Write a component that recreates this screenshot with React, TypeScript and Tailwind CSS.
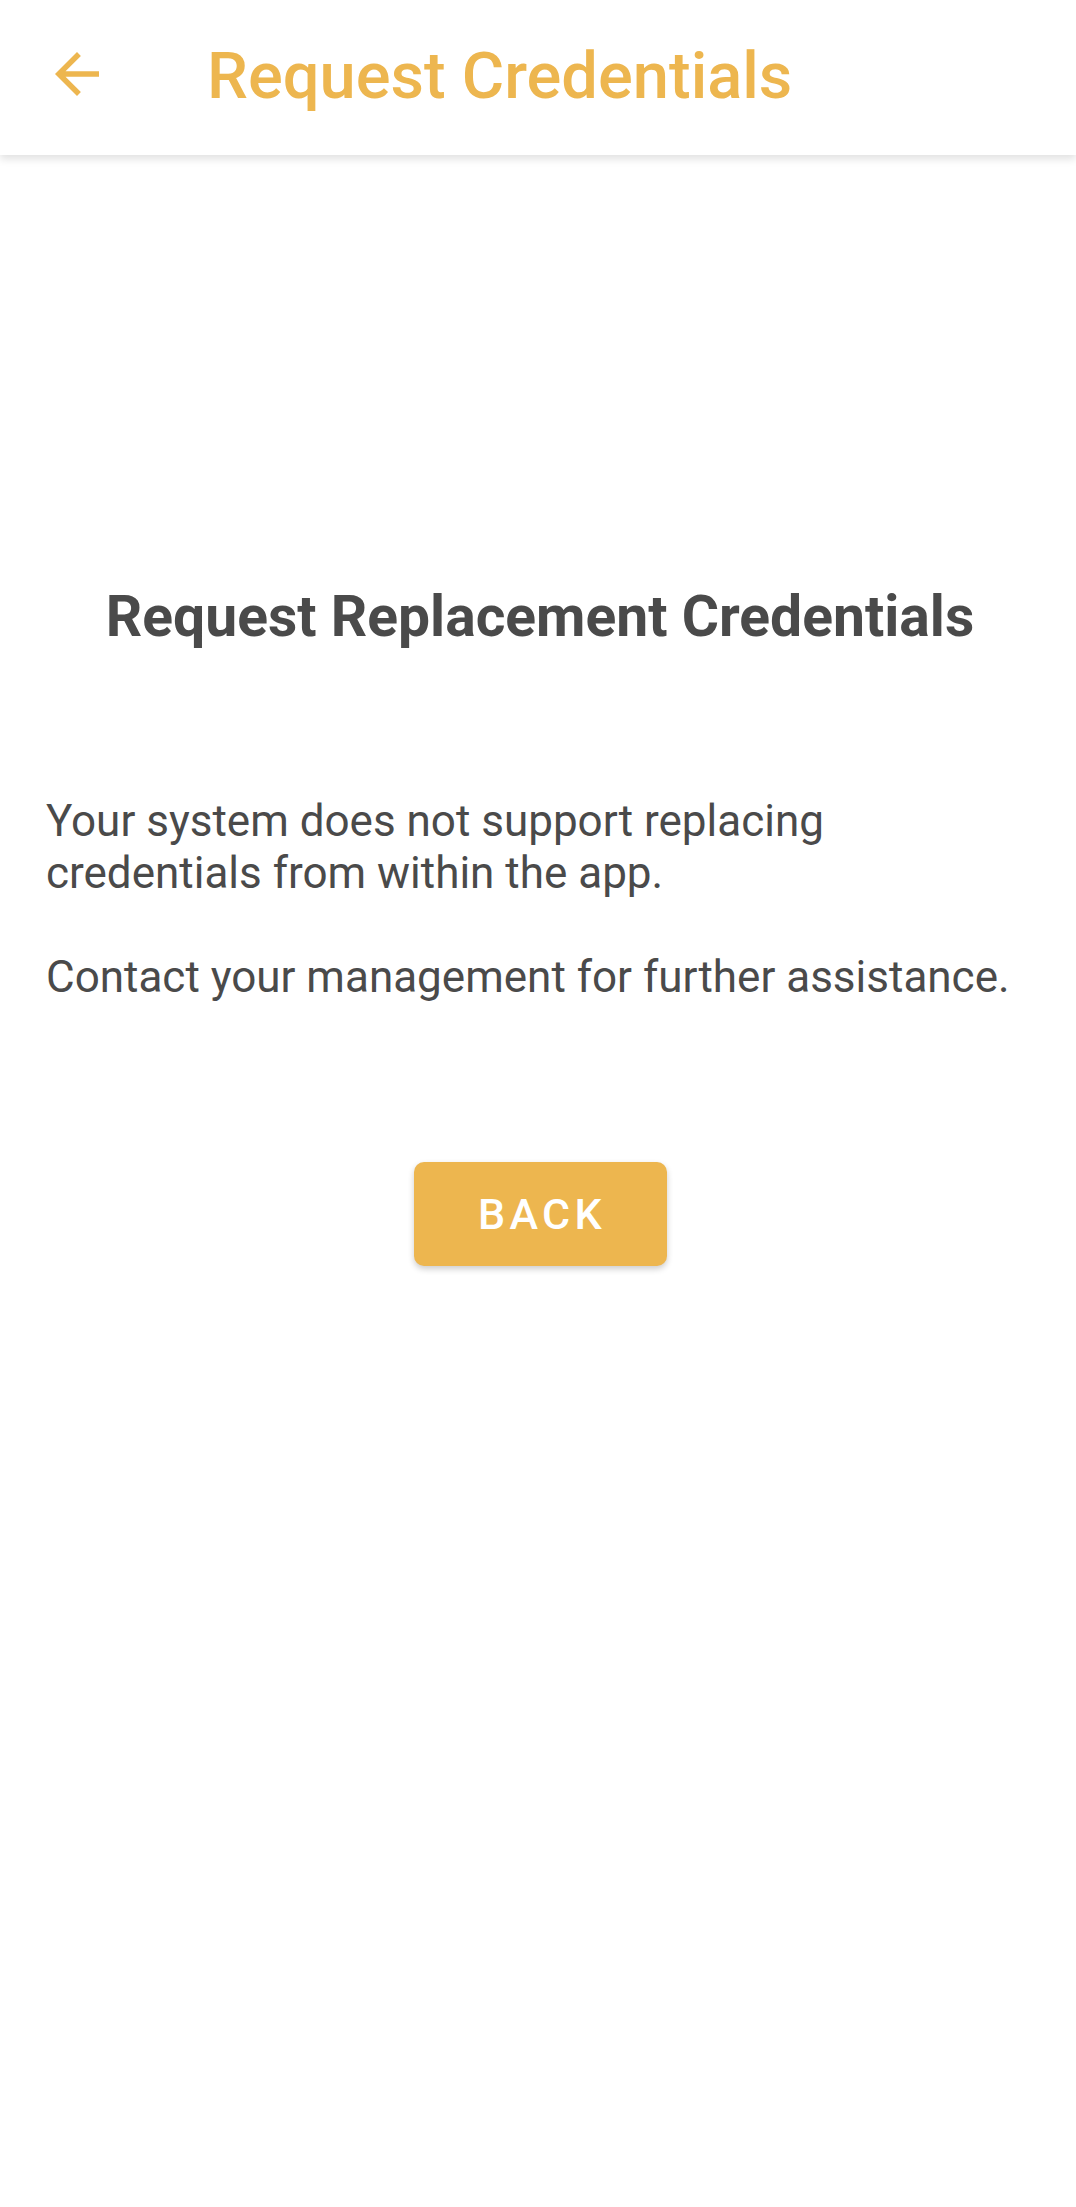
import React from "react";

export default function App() {
  return (
    <div className="w-[1076px] h-[2207px] bg-white flex flex-col" style={{ fontFamily: "Roboto, 'Noto Sans', sans-serif" }}>
      <header className="relative z-10 h-[155px] shrink-0 bg-white flex items-center shadow-[0_4px_8px_rgba(0,0,0,0.12)]">
        <div className="ml-[44px] w-[66px] h-[66px] -mt-[8px] flex items-center justify-center">
          <svg viewBox="0 0 24 24" width="66" height="66" fill="#EDB64F">
            <path d="M20 11H7.83l5.59-5.59L12 4l-8 8 8 8 1.41-1.41L7.83 13H20v-2z" />
          </svg>
        </div>
        <h1 className="ml-[97px] -mt-[2px] text-[65px] leading-none font-medium text-[#EDB64F]">Request Credentials</h1>
      </header>
      <main className="flex flex-col">
        <h2 className="mt-[427px] pl-[4px] text-center text-[57px] leading-[70px] font-bold text-[#4a4a4a]">
          Request Replacement Credentials
        </h2>
        <div className="mt-[143px] px-[46px] text-[44px] leading-[52px] text-[#4a4a4a]">
          <p>Your system does not support replacing<br />credentials from within the app.</p>
          <p className="mt-[52px]">Contact your management for further assistance.</p>
        </div>
        <div className="mt-[159px] flex justify-center pl-[4px]">
          <button className="w-[253px] h-[104px] rounded-[10px] bg-[#EDB64F] text-white text-[43px] font-medium tracking-[0.1em] pl-[4px] shadow-[0_3px_6px_rgba(0,0,0,0.2)]">
            BACK
          </button>
        </div>
      </main>
    </div>
  );
}
